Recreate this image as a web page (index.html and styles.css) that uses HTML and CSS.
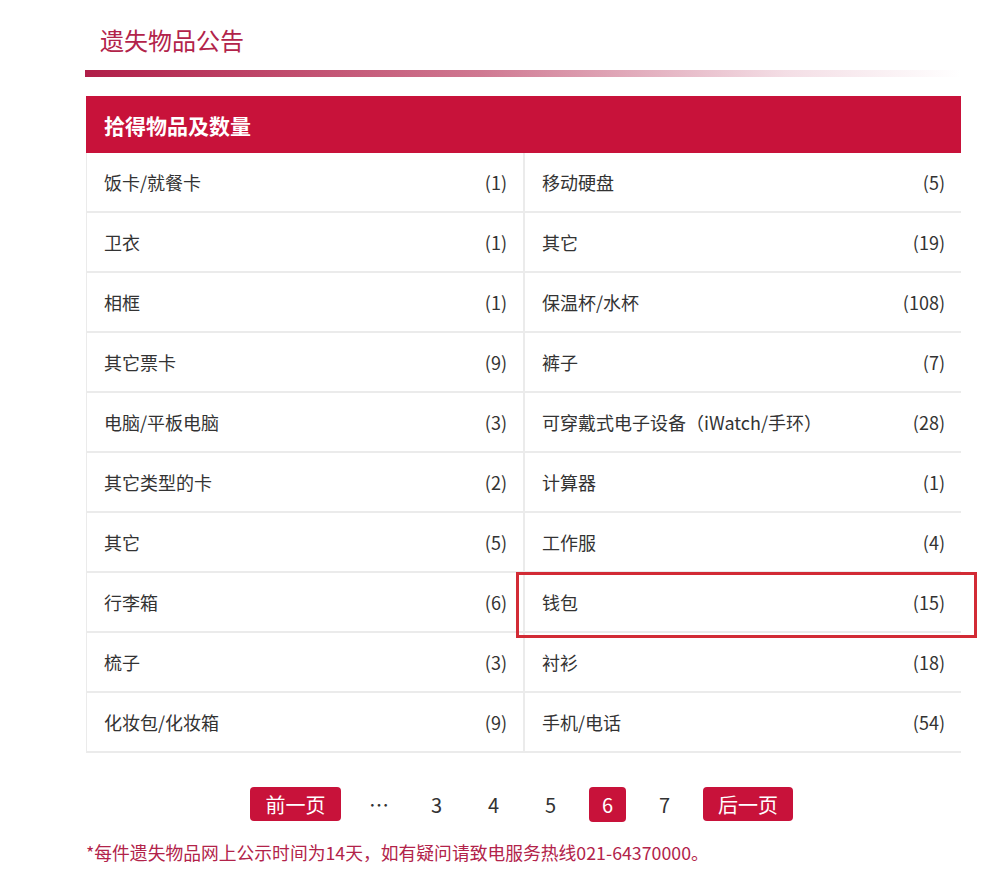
FILE: index.html
```html
<!DOCTYPE html>
<html lang="zh">
<head>
<meta charset="utf-8">
<link rel="stylesheet" href="styles.css">
</head>
<body>
<div class="page">
  <h1 class="title">遗失物品公告</h1>
  <div class="bar"></div>
  <div class="table">
    <div class="head">拾得物品及数量</div>
    <div class="grid">
      <div class="cell"><span>饭卡/就餐卡</span><span>(1)</span></div>
      <div class="cell"><span>移动硬盘</span><span>(5)</span></div>
      <div class="cell"><span>卫衣</span><span>(1)</span></div>
      <div class="cell"><span>其它</span><span>(19)</span></div>
      <div class="cell"><span>相框</span><span>(1)</span></div>
      <div class="cell"><span>保温杯/水杯</span><span>(108)</span></div>
      <div class="cell"><span>其它票卡</span><span>(9)</span></div>
      <div class="cell"><span>裤子</span><span>(7)</span></div>
      <div class="cell"><span>电脑/平板电脑</span><span>(3)</span></div>
      <div class="cell"><span>可穿戴式电子设备（iWatch/手环）</span><span>(28)</span></div>
      <div class="cell"><span>其它类型的卡</span><span>(2)</span></div>
      <div class="cell"><span>计算器</span><span>(1)</span></div>
      <div class="cell"><span>其它</span><span>(5)</span></div>
      <div class="cell"><span>工作服</span><span>(4)</span></div>
      <div class="cell"><span>行李箱</span><span>(6)</span></div>
      <div class="cell hl"><span>钱包</span><span>(15)</span><div class="mark"></div></div>
      <div class="cell"><span>梳子</span><span>(3)</span></div>
      <div class="cell"><span>衬衫</span><span>(18)</span></div>
      <div class="cell"><span>化妆包/化妆箱</span><span>(9)</span></div>
      <div class="cell"><span>手机/电话</span><span>(54)</span></div>
    </div>
  </div>
  <div class="pager">
    <span class="btn prev">前一页</span>
    <span class="num dots">⋯</span>
    <span class="num">3</span>
    <span class="num">4</span>
    <span class="num">5</span>
    <span class="num"><span class="cur">6</span></span>
    <span class="num">7</span>
    <span class="btn next">后一页</span>
  </div>
  <p class="note">*每件遗失物品网上公示时间为14天，如有疑问请致电服务热线021-64370000。</p>
</div>
</body>
</html>
```
FILE: styles.css
```css
* { box-sizing: border-box; }
html, body { margin: 0; padding: 0; background: #fff; }
body { font-family: "Noto Sans CJK SC", "Noto Sans", sans-serif; color: #333; }
.page { width: 876px; margin-left: 85px; padding-top: 24px; }
.title { margin: 0 0 0 15px; font-size: 24px; font-weight: 400; color: #b2234a; line-height: 32px; }
.bar { margin-top: 14px; height: 7px; background: linear-gradient(to right, #b01e48 0%, #cf7891 45%, rgba(236, 200, 212, 0.6) 80%, rgba(255,255,255,0) 100%); }
.table { margin-top: 19px; margin-left: 1px; width: 875px; }
.head { height: 57px; background: #c8123a; color: #fff; font-weight: 700; font-size: 21px; padding-left: 18px; display: flex; align-items: center; }
.grid { display: grid; grid-template-columns: 436px 436px; gap: 2px; background: #ebebeb; padding: 0 1px 2px 1px; }
.cell { position: relative; background: #fff; height: 58px; display: flex; align-items: center; justify-content: space-between; padding: 0 16px 0 17px; font-size: 18px; color: #333; }
.hl { z-index: 2; }
.mark { position: absolute; z-index: 2; left: -9px; top: -1px; width: 461px; height: 66px; border: 3px solid #d22b35; pointer-events: none; }
.pager { display: flex; align-items: center; justify-content: center; margin-top: 34px; margin-left: -3px; height: 34px; }
.btn { background: #c8123a; color: #fff; font-size: 20px; height: 34px; width: 91px; border-radius: 4px; display: flex; align-items: center; justify-content: center; }
.prev { margin-right: 9px; }
.next { margin-left: 10px; width: 90px; }
.num { width: 57px; text-align: center; font-size: 20px; color: #333; display: flex; justify-content: center; align-items: center; }
.dots { width: 58px; font-size: 20px; }
.cur { width: 37px; height: 35px; background: #c8123a; color: #fff; border-radius: 4px; display: flex; align-items: center; justify-content: center; }
.note { margin: 18px 0 0 1px; font-size: 17.8px; color: #b2234a; }
```
